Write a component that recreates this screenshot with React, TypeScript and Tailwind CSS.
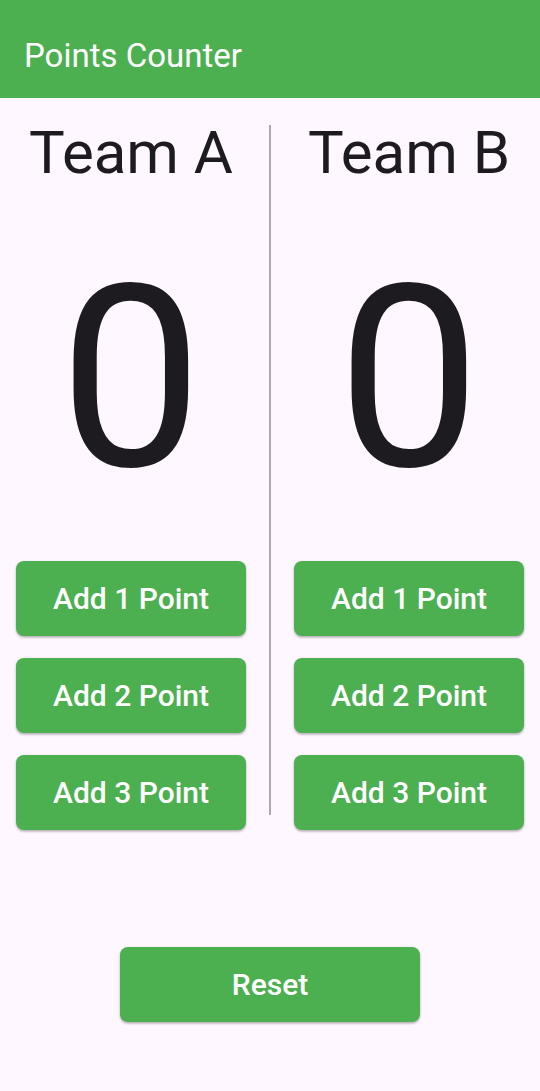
import { useState } from "react";

const buttonClass =
  "flex h-[75px] items-center justify-center rounded-lg bg-[#4caf50] text-[30px] leading-9 font-medium text-white shadow-[0_1px_3px_rgba(0,0,0,0.22),0_2px_2px_rgba(0,0,0,0.12)]";

type TeamProps = {
  name: string;
  score: number;
  onAdd: (points: number) => void;
};

function Team({ name, score, onAdd }: TeamProps) {
  return (
    <section className="flex min-w-0 flex-1 flex-col items-center px-4">
      <h2 className="text-[60px] leading-[70px] whitespace-nowrap">{name}</h2>
      <output className="mt-[39px] text-[255px] leading-[304px]">{score}</output>
      <div className="mt-[30px] flex w-full flex-col gap-[22px]">
        {[1, 2, 3].map((points) => (
          <button key={points} type="button" className={buttonClass} onClick={() => onAdd(points)}>
            Add {points} Point
          </button>
        ))}
      </div>
    </section>
  );
}

export default function App() {
  const [scoreA, setScoreA] = useState(0);
  const [scoreB, setScoreB] = useState(0);

  const reset = () => {
    setScoreA(0);
    setScoreB(0);
  };

  return (
    <div className="flex min-h-screen flex-col bg-[#fef7ff] font-['Roboto',sans-serif] text-[#1d1b20]">
      <header className="bg-[#4caf50] px-6 pt-[34px] pb-5 text-white">
        <h1 className="text-[33px] leading-[44px]">Points Counter</h1>
      </header>
      <main className="flex flex-col">
        <div className="flex pt-5">
          <Team name="Team A" score={scoreA} onAdd={(p) => setScoreA(scoreA + p)} />
          <div className="mx-[7px] mt-[7px] mb-[15px] w-[2px] bg-[#aca8ae]" />
          <Team name="Team B" score={scoreB} onAdd={(p) => setScoreB(scoreB + p)} />
        </div>
        <div className="flex justify-center pt-[117px] pb-8">
          <button type="button" className={`w-[300px] ${buttonClass}`} onClick={reset}>
            Reset
          </button>
        </div>
      </main>
    </div>
  );
}
